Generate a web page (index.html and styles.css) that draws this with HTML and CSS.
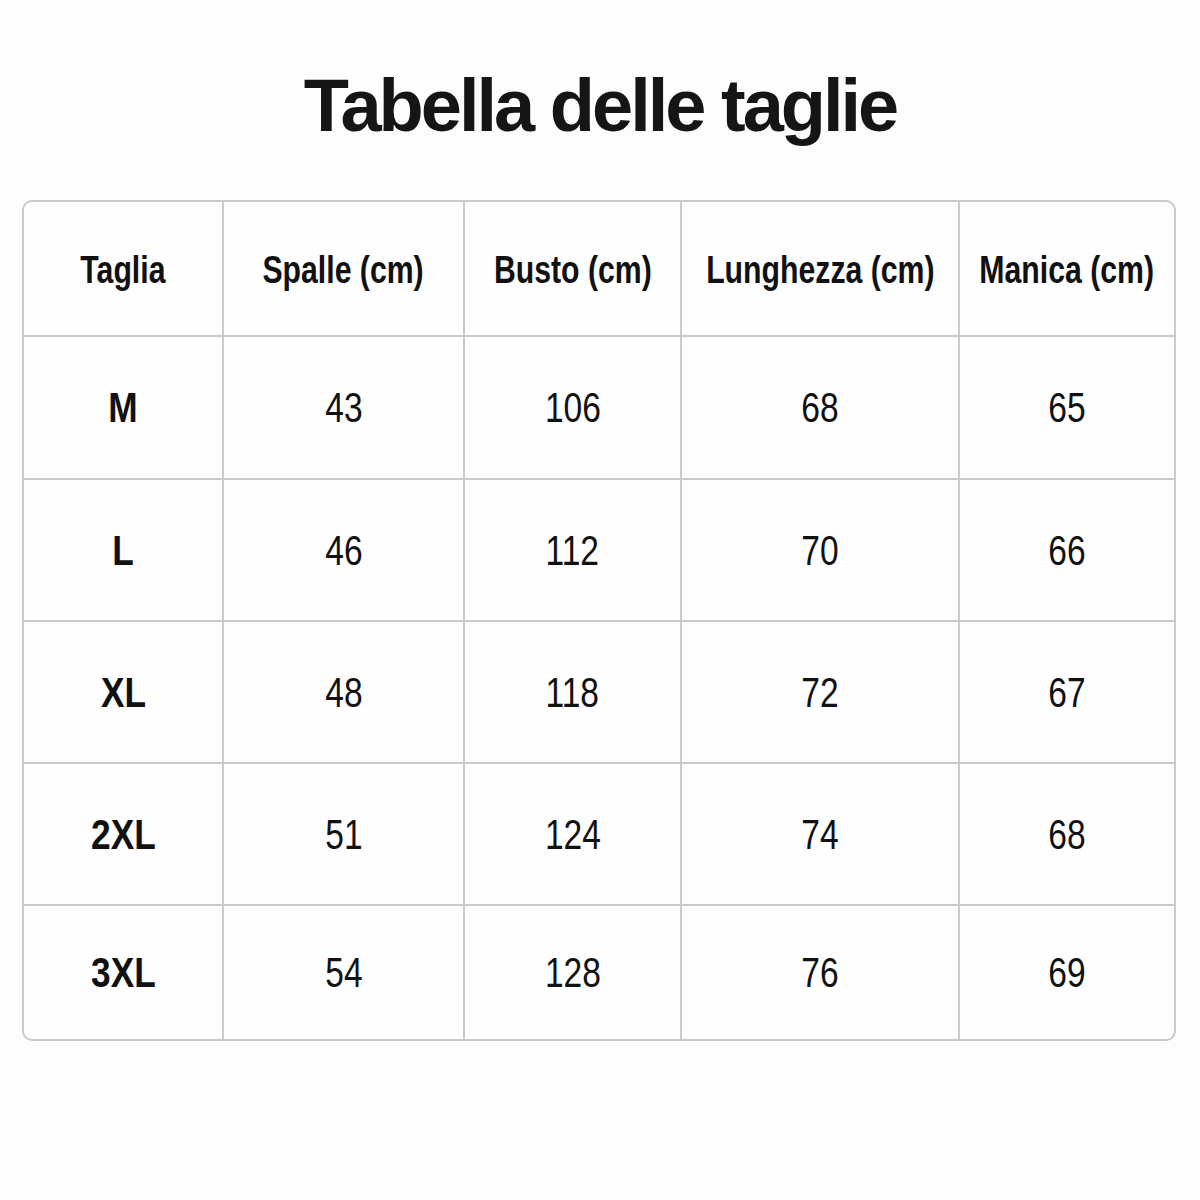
FILE: index.html
```html
<!DOCTYPE html>
<html lang="it">
<head>
<meta charset="utf-8">
<title>Tabella delle taglie</title>
<link rel="stylesheet" href="styles.css">
</head>
<body>
<main class="page">
  <h1 class="title">Tabella delle taglie</h1>
  <div class="table">
    <div class="cell head"><span class="txt">Taglia</span></div>
    <div class="cell head"><span class="txt">Spalle (cm)</span></div>
    <div class="cell head"><span class="txt">Busto (cm)</span></div>
    <div class="cell head"><span class="txt">Lunghezza (cm)</span></div>
    <div class="cell head last-col"><span class="txt">Manica (cm)</span></div>

    <div class="cell size"><span class="txt">M</span></div>
    <div class="cell num"><span class="txt">43</span></div>
    <div class="cell num"><span class="txt">106</span></div>
    <div class="cell num"><span class="txt">68</span></div>
    <div class="cell num last-col"><span class="txt">65</span></div>

    <div class="cell size"><span class="txt">L</span></div>
    <div class="cell num"><span class="txt">46</span></div>
    <div class="cell num"><span class="txt">112</span></div>
    <div class="cell num"><span class="txt">70</span></div>
    <div class="cell num last-col"><span class="txt">66</span></div>

    <div class="cell size"><span class="txt">XL</span></div>
    <div class="cell num"><span class="txt">48</span></div>
    <div class="cell num"><span class="txt">118</span></div>
    <div class="cell num"><span class="txt">72</span></div>
    <div class="cell num last-col"><span class="txt">67</span></div>

    <div class="cell size"><span class="txt">2XL</span></div>
    <div class="cell num"><span class="txt">51</span></div>
    <div class="cell num"><span class="txt">124</span></div>
    <div class="cell num"><span class="txt">74</span></div>
    <div class="cell num last-col"><span class="txt">68</span></div>

    <div class="cell size last-row"><span class="txt">3XL</span></div>
    <div class="cell num last-row"><span class="txt">54</span></div>
    <div class="cell num last-row"><span class="txt">128</span></div>
    <div class="cell num last-row"><span class="txt">76</span></div>
    <div class="cell num last-row last-col"><span class="txt">69</span></div>
  </div>
</main>
</body>
</html>
```

FILE: styles.css
```css
html, body {
  margin: 0;
  padding: 0;
  background: #fdfdfd;
}

.page {
  width: 1200px;
  height: 1200px;
  padding-top: 69px;
  box-sizing: border-box;
  font-family: "Liberation Sans", Arial, sans-serif;
  color: #111;
}

.title {
  margin: 0 0 57px;
  text-align: center;
  font-size: 74px;
  line-height: 74px;
  font-weight: 700;
  letter-spacing: -3px;
  color: #151515;
}

.table {
  margin-left: 22px;
  width: 1154px;
  box-sizing: border-box;
  display: grid;
  grid-template-columns: 200px 241px 217px 278px 1fr;
  grid-template-rows: 135px 143px 142px 142px 142px 1fr;
  height: 841px;
  border: 2px solid #cacaca;
  border-radius: 10px;
  background: #fefefe;
  overflow: hidden;
}

.cell {
  display: flex;
  align-items: center;
  justify-content: center;
  min-width: 0;
  border-right: 2px solid #cacaca;
  border-bottom: 2px solid #cacaca;
  white-space: nowrap;
}

.last-col { border-right: none; }
.last-row { border-bottom: none; }

.txt {
  display: inline-block;
  transform: scaleX(0.78);
}

.head {
  font-size: 39px;
  font-weight: 700;
  padding-top: 2px;
}

.head .txt { transform: scaleX(0.775); }

.size {
  font-size: 43px;
  font-weight: 700;
}

.size .txt { transform: scaleX(0.82); }

.num {
  font-size: 43px;
  font-weight: 400;
}
```
